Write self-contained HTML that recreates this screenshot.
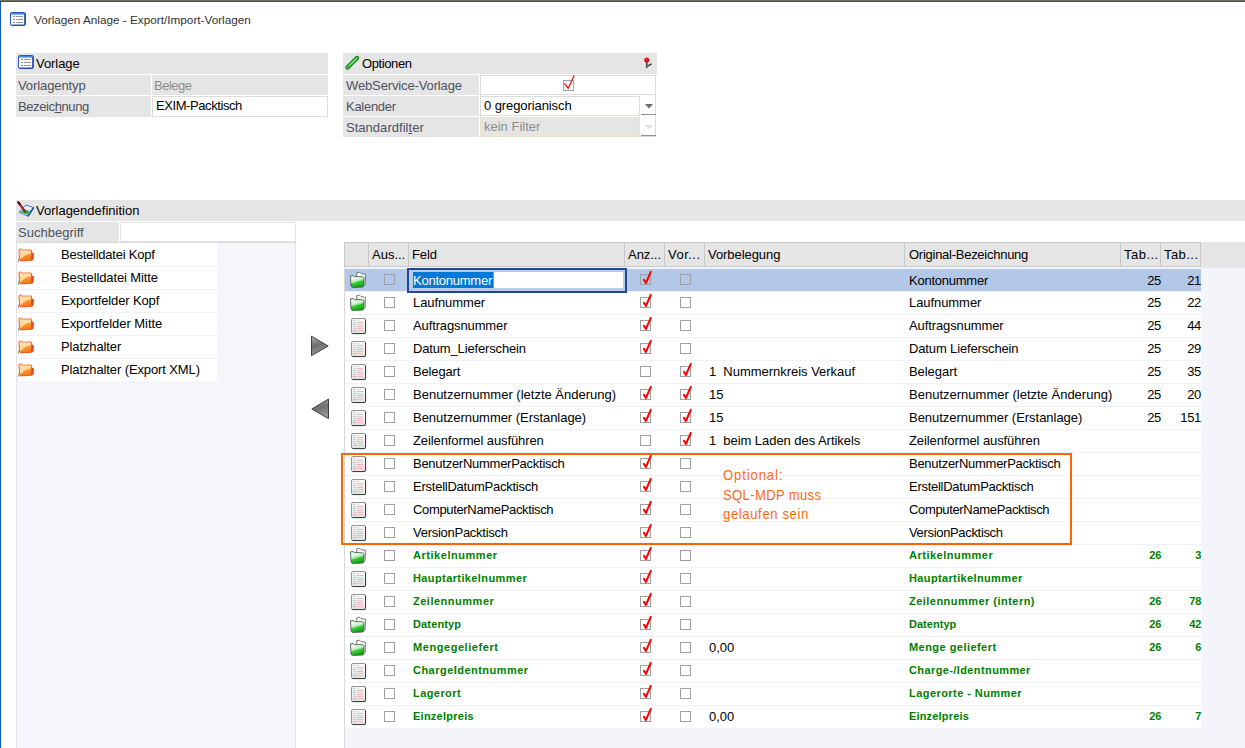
<!DOCTYPE html><html><head><meta charset="utf-8"><style>
*{margin:0;padding:0;box-sizing:border-box}
html,body{width:1245px;height:748px;overflow:hidden;background:#fff;font-family:"Liberation Sans",sans-serif;font-size:13px;color:#000}
.a{position:absolute}
.t{position:absolute;white-space:nowrap;line-height:16px}
.band{position:absolute;background:#e5e5e5}
.lab{color:#4f5060}
.box{position:absolute;background:#fff;border:1px solid #dcdcdc}
.cb{position:absolute;width:11px;height:11px;border:1px solid #a0a0a0}
.g{color:#008000;font-weight:bold;font-size:11px}
.r{text-align:right}
svg{position:absolute;overflow:visible}
</style></head><body>
<div class="a" style="left:0;top:0;width:1245px;height:1px;background:#706a64"></div>
<div class="a" style="left:0;top:1px;width:1245px;height:1px;background:#0a58c2"></div>
<div class="a" style="left:0;top:1px;width:1px;height:747px;background:#0a58c2"></div>
<svg style="left:10px;top:12px" width="16" height="14" viewBox="0 0 16 14">
<rect x="0.5" y="0.5" width="15" height="13" rx="1.2" fill="#fbfbfb" stroke="#2456cc" stroke-width="1"/>
<rect x="1" y="1" width="14" height="1.6" fill="#4a7ee8"/>
<path d="M14.6,2 L14.6,13 L1.5,13" stroke="#1c44a8" stroke-width="0.9" fill="none"/>
<rect x="3" y="4" width="2" height="1" fill="#8c8c8c"/><rect x="6" y="4" width="7" height="1" fill="#9a9a9a"/>
<rect x="3" y="7" width="2" height="1" fill="#8c8c8c"/><rect x="6" y="7" width="7" height="1" fill="#9a9a9a"/>
<rect x="3" y="10" width="2" height="1" fill="#8c8c8c"/><rect x="6" y="10" width="7" height="1" fill="#9a9a9a"/>
</svg>
<div id="x0" class="t" style="left:34px;top:12px;font-size:11.75px;color:#333;">Vorlagen Anlage - Export/Import-Vorlagen</div>
<div class="band" style="left:16px;top:53px;width:312px;height:21px"></div>
<svg style="left:18px;top:55px" width="16" height="14" viewBox="0 0 16 14">
<rect x="0.5" y="0.5" width="15" height="13" rx="1.2" fill="#fbfbfb" stroke="#2456cc" stroke-width="1"/>
<rect x="1" y="1" width="14" height="1.6" fill="#4a7ee8"/>
<path d="M14.6,2 L14.6,13 L1.5,13" stroke="#1c44a8" stroke-width="0.9" fill="none"/>
<rect x="3" y="4" width="2" height="1" fill="#8c8c8c"/><rect x="6" y="4" width="7" height="1" fill="#9a9a9a"/>
<rect x="3" y="7" width="2" height="1" fill="#8c8c8c"/><rect x="6" y="7" width="7" height="1" fill="#9a9a9a"/>
<rect x="3" y="10" width="2" height="1" fill="#8c8c8c"/><rect x="6" y="10" width="7" height="1" fill="#9a9a9a"/>
</svg>
<div id="x1" class="t" style="left:36px;top:56px;letter-spacing:-0.067px;">Vorlage</div>
<div class="band" style="left:16px;top:75px;width:135px;height:20px"></div>
<div class="band" style="left:152px;top:75px;width:176px;height:20px"></div>
<div id="x2" class="t lab" style="left:18px;top:78px;letter-spacing:-0.100px;">Vorlagentyp</div>
<div id="x3" class="t" style="left:154px;top:78px;color:#8c8c8c;letter-spacing:-0.500px;">Belege</div>
<div class="band" style="left:16px;top:96px;width:135px;height:21px"></div>
<div class="box" style="left:152px;top:96px;width:176px;height:21px"></div>
<div id="x4" class="t lab" style="left:18px;top:99px;letter-spacing:-0.400px;">Bezeic<u>h</u>nung</div>
<div id="x5" class="t" style="left:156px;top:98px;letter-spacing:-0.416px;">EXIM-Packtisch</div>
<div class="band" style="left:343px;top:53px;width:314px;height:21px"></div>
<svg style="left:346px;top:56px" width="14" height="13" viewBox="0 0 14 13">
<path d="M1.5,11.5 L11,2" stroke="#0a5a0a" stroke-width="4.2" stroke-linecap="round"/>
<path d="M1.5,11.5 L11,2" stroke="#3cc83c" stroke-width="2.6" stroke-linecap="round"/>
<path d="M3,9.5 L10.5,2.5" stroke="#b8f0a0" stroke-width="0.8"/>
</svg>
<div id="x6" class="t" style="left:362px;top:56px;letter-spacing:-0.400px;">Optionen</div>
<svg style="left:643px;top:56px" width="10" height="12" viewBox="0 0 10 12">
<rect x="2.9" y="5.5" width="1.7" height="6.4" fill="#4a4a54"/>
<path d="M4.6,10 L8.6,7.8" stroke="#404040" stroke-width="1.5"/>
<circle cx="3.7" cy="3.9" r="2.5" fill="#e80000"/><circle cx="3.2" cy="3.3" r="0.8" fill="#ff7070"/>
</svg>
<div class="band" style="left:343px;top:75px;width:136px;height:62px"></div>
<div class="a" style="left:479px;top:75px;width:1px;height:62px;background:#fff"></div>
<div class="a" style="left:480px;top:75px;width:176px;height:62px;background:#fff;border:1px solid #dcdcdc"></div>
<div class="a" style="left:480px;top:94px;width:176px;height:1px;background:#dcdcdc"></div>
<div class="a" style="left:343px;top:95px;width:137px;height:1px;background:#fff"></div>
<div class="a" style="left:343px;top:116px;width:137px;height:1px;background:#fff"></div>
<div id="x7" class="t lab" style="left:346px;top:78px;letter-spacing:-0.130px;">WebService-Vorlage</div>
<div id="x8" class="t lab" style="left:346px;top:99px;letter-spacing:-0.286px;">Kalender</div>
<div id="x9" class="t lab" style="left:346px;top:120px;letter-spacing:0.030px;">Standardfil<u>t</u>er</div>
<div class="cb" style="left:563px;top:80px"></div>
<svg style="left:563px;top:80px" width="11" height="11"><polyline points="1.5,3.5 5.2,8.2 11.2,-4.5" fill="none" stroke="#ff1010" stroke-width="1.3"/></svg>
<div class="box" style="left:480px;top:96px;width:160px;height:20px"></div>
<div id="x10" class="t" style="left:484px;top:98px;letter-spacing:-0.086px;">0 gregorianisch</div>
<svg style="left:645px;top:104px" width="8" height="5"><path d="M0,0 L8,0 L4,4.5 Z" fill="#6a6a6a"/></svg>
<div class="a" style="left:641px;top:114px;width:15px;height:1px;background:#909090"></div>
<div class="a" style="left:480px;top:117px;width:160px;height:20px;background:#e5e5e5;border:1px solid #ece4c8"></div>
<div id="x11" class="t" style="left:484px;top:119px;color:#8c8c8c;">kein Filter</div>
<svg style="left:645px;top:125px" width="8" height="5"><path d="M0,0 L8,0 L4,4.5 Z" fill="#e0e0e0"/></svg>
<div class="a" style="left:641px;top:135px;width:15px;height:1px;background:#909090"></div>
<div class="band" style="left:16px;top:200px;width:1229px;height:21px"></div>
<svg style="left:17px;top:201px" width="18" height="17" viewBox="0 0 18 17">
<path d="M2,11.2 L8.8,4 L16.7,6.5 L10.8,15.3 Z" fill="#e4eeff" stroke="#4a78d8" stroke-width="1"/>
<path d="M10.8,15.3 L16.7,6.5" stroke="#1e4aa8" stroke-width="1.6"/>
<path d="M6,8.5 L13,10.2" stroke="#9aa8f0" stroke-width="1"/>
<path d="M3.4,11 L6.6,8.2 L12.6,10.4 L10.4,13.8 Z" fill="#28b828"/>
<path d="M1.4,1.3 L8.4,10.8" stroke="#a01c1c" stroke-width="2" stroke-linecap="round"/>
<path d="M1.4,1.3 L3,3.5" stroke="#3a1010" stroke-width="2" stroke-linecap="round"/>
</svg>
<div id="x12" class="t" style="left:36px;top:203px;">Vorlagendefinition</div>
<div class="band" style="left:16px;top:222px;width:103px;height:21px"></div>
<div id="x13" class="t lab" style="left:18px;top:225px;letter-spacing:0.020px;">Suchbegriff</div>
<div class="box" style="left:120px;top:222px;width:176px;height:20px;border-color:#e2e2e2"></div><div class="a" style="left:16px;top:242px;width:280px;height:1px;background:#dadada"></div>
<div class="a" style="left:16px;top:243px;width:280px;height:505px;background:#f4f6fb;border-left:1px solid #e4e4e4;border-right:1px solid #e2e2e2"></div>
<div class="a" style="left:17px;top:243px;width:200px;height:138px;background:#fff"></div>
<div class="a" style="left:17px;top:266px;width:200px;height:1px;background:#f0f2f8"></div>
<svg style="left:18px;top:249px" width="16" height="14" viewBox="0 0 16 14">
<defs><linearGradient id="fo" x1="0" y1="0" x2="0.3" y2="1"><stop offset="0" stop-color="#ffd8a0"/><stop offset="0.5" stop-color="#ffa040"/><stop offset="1" stop-color="#f47a18"/></linearGradient></defs>
<path d="M12.5,3.5 L15.6,4.6 L15.2,10.2 Q15,11 14,11.2 L12.5,11.3 Z" fill="#ea4e22" stroke="#b83a18" stroke-width="0.6"/>
<path d="M0.9,0.9 Q1,0.2 1.8,0.2 L3.6,0.2 L4.6,1.1 L12.6,1 Q13.7,1 13.7,2 L13.5,10.4 Q13.4,11.4 12.4,11.4 L2.8,11.9 Q1.8,11.9 1.6,11 Z" fill="url(#fo)" stroke="#e04a1c" stroke-width="0.8"/>
<path d="M1.8,1.6 L12.8,1.6 L12.8,4.6 Q7.5,4.8 3.2,9.6 L2,10 Z" fill="#ffe4b4" opacity="0.85"/>
<path d="M0.5,9.5 L0.5,13.2" stroke="#808080" stroke-width="0.7"/>
</svg>
<div id="x14" class="t" style="left:61px;top:247px;letter-spacing:-0.238px;">Bestelldatei Kopf</div>
<div class="a" style="left:17px;top:289px;width:200px;height:1px;background:#f0f2f8"></div>
<svg style="left:18px;top:272px" width="16" height="14" viewBox="0 0 16 14">
<defs><linearGradient id="fo" x1="0" y1="0" x2="0.3" y2="1"><stop offset="0" stop-color="#ffd8a0"/><stop offset="0.5" stop-color="#ffa040"/><stop offset="1" stop-color="#f47a18"/></linearGradient></defs>
<path d="M12.5,3.5 L15.6,4.6 L15.2,10.2 Q15,11 14,11.2 L12.5,11.3 Z" fill="#ea4e22" stroke="#b83a18" stroke-width="0.6"/>
<path d="M0.9,0.9 Q1,0.2 1.8,0.2 L3.6,0.2 L4.6,1.1 L12.6,1 Q13.7,1 13.7,2 L13.5,10.4 Q13.4,11.4 12.4,11.4 L2.8,11.9 Q1.8,11.9 1.6,11 Z" fill="url(#fo)" stroke="#e04a1c" stroke-width="0.8"/>
<path d="M1.8,1.6 L12.8,1.6 L12.8,4.6 Q7.5,4.8 3.2,9.6 L2,10 Z" fill="#ffe4b4" opacity="0.85"/>
<path d="M0.5,9.5 L0.5,13.2" stroke="#808080" stroke-width="0.7"/>
</svg>
<div id="x15" class="t" style="left:61px;top:270px;letter-spacing:-0.118px;">Bestelldatei Mitte</div>
<div class="a" style="left:17px;top:312px;width:200px;height:1px;background:#f0f2f8"></div>
<svg style="left:18px;top:295px" width="16" height="14" viewBox="0 0 16 14">
<defs><linearGradient id="fo" x1="0" y1="0" x2="0.3" y2="1"><stop offset="0" stop-color="#ffd8a0"/><stop offset="0.5" stop-color="#ffa040"/><stop offset="1" stop-color="#f47a18"/></linearGradient></defs>
<path d="M12.5,3.5 L15.6,4.6 L15.2,10.2 Q15,11 14,11.2 L12.5,11.3 Z" fill="#ea4e22" stroke="#b83a18" stroke-width="0.6"/>
<path d="M0.9,0.9 Q1,0.2 1.8,0.2 L3.6,0.2 L4.6,1.1 L12.6,1 Q13.7,1 13.7,2 L13.5,10.4 Q13.4,11.4 12.4,11.4 L2.8,11.9 Q1.8,11.9 1.6,11 Z" fill="url(#fo)" stroke="#e04a1c" stroke-width="0.8"/>
<path d="M1.8,1.6 L12.8,1.6 L12.8,4.6 Q7.5,4.8 3.2,9.6 L2,10 Z" fill="#ffe4b4" opacity="0.85"/>
<path d="M0.5,9.5 L0.5,13.2" stroke="#808080" stroke-width="0.7"/>
</svg>
<div id="x16" class="t" style="left:61px;top:293px;letter-spacing:-0.137px;">Exportfelder Kopf</div>
<div class="a" style="left:17px;top:335px;width:200px;height:1px;background:#f0f2f8"></div>
<svg style="left:18px;top:318px" width="16" height="14" viewBox="0 0 16 14">
<defs><linearGradient id="fo" x1="0" y1="0" x2="0.3" y2="1"><stop offset="0" stop-color="#ffd8a0"/><stop offset="0.5" stop-color="#ffa040"/><stop offset="1" stop-color="#f47a18"/></linearGradient></defs>
<path d="M12.5,3.5 L15.6,4.6 L15.2,10.2 Q15,11 14,11.2 L12.5,11.3 Z" fill="#ea4e22" stroke="#b83a18" stroke-width="0.6"/>
<path d="M0.9,0.9 Q1,0.2 1.8,0.2 L3.6,0.2 L4.6,1.1 L12.6,1 Q13.7,1 13.7,2 L13.5,10.4 Q13.4,11.4 12.4,11.4 L2.8,11.9 Q1.8,11.9 1.6,11 Z" fill="url(#fo)" stroke="#e04a1c" stroke-width="0.8"/>
<path d="M1.8,1.6 L12.8,1.6 L12.8,4.6 Q7.5,4.8 3.2,9.6 L2,10 Z" fill="#ffe4b4" opacity="0.85"/>
<path d="M0.5,9.5 L0.5,13.2" stroke="#808080" stroke-width="0.7"/>
</svg>
<div id="x17" class="t" style="left:61px;top:316px;letter-spacing:-0.035px;">Exportfelder Mitte</div>
<div class="a" style="left:17px;top:358px;width:200px;height:1px;background:#f0f2f8"></div>
<svg style="left:18px;top:341px" width="16" height="14" viewBox="0 0 16 14">
<defs><linearGradient id="fo" x1="0" y1="0" x2="0.3" y2="1"><stop offset="0" stop-color="#ffd8a0"/><stop offset="0.5" stop-color="#ffa040"/><stop offset="1" stop-color="#f47a18"/></linearGradient></defs>
<path d="M12.5,3.5 L15.6,4.6 L15.2,10.2 Q15,11 14,11.2 L12.5,11.3 Z" fill="#ea4e22" stroke="#b83a18" stroke-width="0.6"/>
<path d="M0.9,0.9 Q1,0.2 1.8,0.2 L3.6,0.2 L4.6,1.1 L12.6,1 Q13.7,1 13.7,2 L13.5,10.4 Q13.4,11.4 12.4,11.4 L2.8,11.9 Q1.8,11.9 1.6,11 Z" fill="url(#fo)" stroke="#e04a1c" stroke-width="0.8"/>
<path d="M1.8,1.6 L12.8,1.6 L12.8,4.6 Q7.5,4.8 3.2,9.6 L2,10 Z" fill="#ffe4b4" opacity="0.85"/>
<path d="M0.5,9.5 L0.5,13.2" stroke="#808080" stroke-width="0.7"/>
</svg>
<div id="x18" class="t" style="left:61px;top:339px;letter-spacing:-0.120px;">Platzhalter</div>
<svg style="left:18px;top:364px" width="16" height="14" viewBox="0 0 16 14">
<defs><linearGradient id="fo" x1="0" y1="0" x2="0.3" y2="1"><stop offset="0" stop-color="#ffd8a0"/><stop offset="0.5" stop-color="#ffa040"/><stop offset="1" stop-color="#f47a18"/></linearGradient></defs>
<path d="M12.5,3.5 L15.6,4.6 L15.2,10.2 Q15,11 14,11.2 L12.5,11.3 Z" fill="#ea4e22" stroke="#b83a18" stroke-width="0.6"/>
<path d="M0.9,0.9 Q1,0.2 1.8,0.2 L3.6,0.2 L4.6,1.1 L12.6,1 Q13.7,1 13.7,2 L13.5,10.4 Q13.4,11.4 12.4,11.4 L2.8,11.9 Q1.8,11.9 1.6,11 Z" fill="url(#fo)" stroke="#e04a1c" stroke-width="0.8"/>
<path d="M1.8,1.6 L12.8,1.6 L12.8,4.6 Q7.5,4.8 3.2,9.6 L2,10 Z" fill="#ffe4b4" opacity="0.85"/>
<path d="M0.5,9.5 L0.5,13.2" stroke="#808080" stroke-width="0.7"/>
</svg>
<div id="x19" class="t" style="left:61px;top:362px;letter-spacing:-0.113px;">Platzhalter (Export XML)</div>
<svg style="left:310px;top:335px" width="20" height="22" viewBox="0 0 20 22">
<defs><linearGradient id="ar" x1="0" y1="0" x2="0.2" y2="1"><stop offset="0" stop-color="#b4b4b4"/><stop offset="0.5" stop-color="#6e6e6e"/><stop offset="1" stop-color="#9a9a9a"/></linearGradient></defs>
<path d="M1.5,1.2 L18.2,11 L1.5,20.6 Z" fill="url(#ar)" stroke="#3e3e3e" stroke-width="1" stroke-linejoin="round"/></svg>
<svg style="left:310px;top:398px" width="20" height="22" viewBox="0 0 20 22">
<path d="M18.5,1 L1.8,11 L18.5,20.6 Z" fill="url(#ar)" stroke="#3e3e3e" stroke-width="1" stroke-linejoin="round"/></svg>
<div class="a" style="left:344px;top:242px;width:901px;height:25px;background:#e5e5e5"></div>
<div class="a" style="left:344px;top:242px;width:857px;height:25px;border:1px solid #c8c8c8"></div>
<div class="a" style="left:368px;top:243px;width:1px;height:23px;background:#c8c8c8"></div>
<div class="a" style="left:408px;top:243px;width:1px;height:23px;background:#c8c8c8"></div>
<div class="a" style="left:624px;top:243px;width:1px;height:23px;background:#c8c8c8"></div>
<div class="a" style="left:664px;top:243px;width:1px;height:23px;background:#c8c8c8"></div>
<div class="a" style="left:704px;top:243px;width:1px;height:23px;background:#c8c8c8"></div>
<div class="a" style="left:904px;top:243px;width:1px;height:23px;background:#c8c8c8"></div>
<div class="a" style="left:1120px;top:243px;width:1px;height:23px;background:#c8c8c8"></div>
<div class="a" style="left:1160px;top:243px;width:1px;height:23px;background:#c8c8c8"></div>
<div id="x20" class="t" style="left:372px;top:247px;">Aus...</div>
<div id="x21" class="t" style="left:412px;top:247px;letter-spacing:-0.067px;">Feld</div>
<div id="x22" class="t" style="left:628px;top:247px;letter-spacing:-0.040px;">Anz...</div>
<div id="x23" class="t" style="left:668px;top:247px;letter-spacing:0.480px;">Vor...</div>
<div id="x24" class="t" style="left:708px;top:247px;letter-spacing:-0.060px;">Vorbelegung</div>
<div id="x25" class="t" style="left:909px;top:247px;letter-spacing:-0.263px;">Original-Bezeichnung</div>
<div id="x26" class="t" style="left:1124px;top:247px;letter-spacing:0.480px;">Tab...</div>
<div id="x27" class="t" style="left:1164px;top:247px;letter-spacing:0.440px;">Tab...</div>
<div class="a" style="left:344px;top:267px;width:901px;height:481px;background:#f4f5fb;border-left:1px solid #d8d8d8"></div>
<div class="a" style="left:1201px;top:242px;width:44px;height:26px;background:#e5e5e5"></div>
<div class="a" style="left:345px;top:268px;width:856px;height:1px;background:#f0f2f8"></div>
<div class="a" style="left:345px;top:269px;width:856px;height:22px;background:#b3c8e8"></div>
<svg style="left:349px;top:271px" width="18" height="18" viewBox="0 0 18 18">
<defs><linearGradient id="fg271" x1="0" y1="0" x2="0.35" y2="1"><stop offset="0" stop-color="#c8f0c8"/><stop offset="0.25" stop-color="#f0fff0"/><stop offset="0.55" stop-color="#b8ecb8"/><stop offset="0.68" stop-color="#38c838"/><stop offset="1" stop-color="#12a812"/></linearGradient></defs>
<path d="M7.6,8 L7.8,1.6 L10.6,1.2 L12,2.6 L16.4,3.2 L16.2,13.5 L14.5,15" fill="#fcfcfc" stroke="#5a5a5a" stroke-width="0.8"/>
<path d="M1.5,4.8 L4,4.5 L5.5,5.6 L13.4,5.7 Q15,5.9 15,7.5 L14.8,14.5 Q14.6,16 13,16.1 L4,16.4 Q2.2,16.4 2,14.6 Z" fill="url(#fg271)" stroke="#354535" stroke-width="0.75"/>
</svg>
<div class="cb" style="left:384px;top:274px"></div>
<div class="cb" style="left:640px;top:274px"></div><svg style="left:640px;top:274px" width="11" height="11"><polyline points="3.9,5.8 5.9,9 10.8,-2.2" fill="none" stroke="#ff0000" stroke-width="2" stroke-linejoin="round" stroke-linecap="round"/></svg>
<div class="cb" style="left:680px;top:274px"></div>
<div id="x29" class="t" style="left:909px;top:273px;letter-spacing:-0.240px;">Kontonummer</div>
<div class="t r" style="left:1121px;width:40px;top:273px;letter-spacing:-0.3px">25</div>
<div class="t r" style="left:1161px;width:40px;top:273px;letter-spacing:-0.3px">21</div>
<div class="a" style="left:345px;top:291px;width:856px;height:1px;background:#f0f2f8"></div>
<div class="a" style="left:345px;top:292px;width:856px;height:22px;background:#fff"></div>
<svg style="left:349px;top:294px" width="18" height="18" viewBox="0 0 18 18">
<defs><linearGradient id="fg294" x1="0" y1="0" x2="0.35" y2="1"><stop offset="0" stop-color="#c8f0c8"/><stop offset="0.25" stop-color="#f0fff0"/><stop offset="0.55" stop-color="#b8ecb8"/><stop offset="0.68" stop-color="#38c838"/><stop offset="1" stop-color="#12a812"/></linearGradient></defs>
<path d="M7.6,8 L7.8,1.6 L10.6,1.2 L12,2.6 L16.4,3.2 L16.2,13.5 L14.5,15" fill="#fcfcfc" stroke="#5a5a5a" stroke-width="0.8"/>
<path d="M1.5,4.8 L4,4.5 L5.5,5.6 L13.4,5.7 Q15,5.9 15,7.5 L14.8,14.5 Q14.6,16 13,16.1 L4,16.4 Q2.2,16.4 2,14.6 Z" fill="url(#fg294)" stroke="#354535" stroke-width="0.75"/>
</svg>
<div class="cb" style="left:384px;top:297px"></div>
<div class="cb" style="left:640px;top:297px"></div><svg style="left:640px;top:297px" width="11" height="11"><polyline points="3.9,5.8 5.9,9 10.8,-2.2" fill="none" stroke="#ff0000" stroke-width="2" stroke-linejoin="round" stroke-linecap="round"/></svg>
<div class="cb" style="left:680px;top:297px"></div>
<div id="x30" class="t" style="left:413px;top:295px;letter-spacing:-0.089px;">Laufnummer</div>
<div id="x31" class="t" style="left:909px;top:295px;letter-spacing:-0.067px;">Laufnummer</div>
<div class="t r" style="left:1121px;width:40px;top:295px;letter-spacing:-0.3px">25</div>
<div class="t r" style="left:1161px;width:40px;top:295px;letter-spacing:-0.3px">22</div>
<div class="a" style="left:345px;top:314px;width:856px;height:1px;background:#f0f2f8"></div>
<div class="a" style="left:345px;top:315px;width:856px;height:22px;background:#fff"></div>
<svg style="left:351px;top:318px" width="16" height="17" viewBox="0 0 16 17">
<defs><linearGradient id="dg" x1="0" y1="0" x2="0" y2="1"><stop offset="0" stop-color="#fafafa"/><stop offset="1" stop-color="#e2e2e2"/></linearGradient></defs>
<rect x="0.5" y="0.5" width="14" height="15" rx="1.5" fill="url(#dg)" stroke="#7a7a7a" stroke-width="0.8"/>
<path d="M14.6,1.5 L14.6,14.2 Q14.6,15.6 13.2,15.6 L1.5,15.6" fill="none" stroke="#383838" stroke-width="1"/>
<g opacity="0.38">
<rect x="2" y="2" width="3" height="1" fill="#999"/><rect x="6" y="2" width="2" height="1" fill="#aaa"/>
<rect x="2" y="4" width="3" height="1" fill="#7a9af0"/><rect x="6" y="4" width="6" height="1" fill="#f05050"/>
<rect x="2" y="6" width="2" height="1" fill="#50a050"/><rect x="4" y="6" width="8" height="1" fill="#b0b0b0"/>
<rect x="2" y="8" width="3" height="1" fill="#70c0c0"/><rect x="6" y="8" width="6" height="1" fill="#f05050"/>
<rect x="2" y="10" width="3" height="1" fill="#7a9af0"/><rect x="6" y="10" width="6" height="1" fill="#f07070"/>
<rect x="2" y="12" width="4" height="1" fill="#f05050"/><rect x="7" y="12" width="5" height="1" fill="#f08080"/>
</g>
</svg>
<div class="cb" style="left:384px;top:320px"></div>
<div class="cb" style="left:640px;top:320px"></div><svg style="left:640px;top:320px" width="11" height="11"><polyline points="3.9,5.8 5.9,9 10.8,-2.2" fill="none" stroke="#ff0000" stroke-width="2" stroke-linejoin="round" stroke-linecap="round"/></svg>
<div class="cb" style="left:680px;top:320px"></div>
<div id="x32" class="t" style="left:413px;top:318px;letter-spacing:-0.124px;">Auftragsnummer</div>
<div id="x33" class="t" style="left:909px;top:318px;letter-spacing:-0.108px;">Auftragsnummer</div>
<div class="t r" style="left:1121px;width:40px;top:318px;letter-spacing:-0.3px">25</div>
<div class="t r" style="left:1161px;width:40px;top:318px;letter-spacing:-0.3px">44</div>
<div class="a" style="left:345px;top:337px;width:856px;height:1px;background:#f0f2f8"></div>
<div class="a" style="left:345px;top:338px;width:856px;height:22px;background:#fff"></div>
<svg style="left:351px;top:341px" width="16" height="17" viewBox="0 0 16 17">
<defs><linearGradient id="dg" x1="0" y1="0" x2="0" y2="1"><stop offset="0" stop-color="#fafafa"/><stop offset="1" stop-color="#e2e2e2"/></linearGradient></defs>
<rect x="0.5" y="0.5" width="14" height="15" rx="1.5" fill="url(#dg)" stroke="#7a7a7a" stroke-width="0.8"/>
<path d="M14.6,1.5 L14.6,14.2 Q14.6,15.6 13.2,15.6 L1.5,15.6" fill="none" stroke="#383838" stroke-width="1"/>
<g opacity="0.38">
<rect x="2" y="2" width="3" height="1" fill="#999"/><rect x="6" y="2" width="2" height="1" fill="#aaa"/>
<rect x="2" y="4" width="3" height="1" fill="#7a9af0"/><rect x="6" y="4" width="6" height="1" fill="#f05050"/>
<rect x="2" y="6" width="2" height="1" fill="#50a050"/><rect x="4" y="6" width="8" height="1" fill="#b0b0b0"/>
<rect x="2" y="8" width="3" height="1" fill="#70c0c0"/><rect x="6" y="8" width="6" height="1" fill="#f05050"/>
<rect x="2" y="10" width="3" height="1" fill="#7a9af0"/><rect x="6" y="10" width="6" height="1" fill="#f07070"/>
<rect x="2" y="12" width="4" height="1" fill="#f05050"/><rect x="7" y="12" width="5" height="1" fill="#f08080"/>
</g>
</svg>
<div class="cb" style="left:384px;top:343px"></div>
<div class="cb" style="left:640px;top:343px"></div><svg style="left:640px;top:343px" width="11" height="11"><polyline points="3.9,5.8 5.9,9 10.8,-2.2" fill="none" stroke="#ff0000" stroke-width="2" stroke-linejoin="round" stroke-linecap="round"/></svg>
<div class="cb" style="left:680px;top:343px"></div>
<div id="x34" class="t" style="left:413px;top:341px;letter-spacing:-0.153px;">Datum_Lieferschein</div>
<div id="x35" class="t" style="left:909px;top:341px;letter-spacing:-0.141px;">Datum Lieferschein</div>
<div class="t r" style="left:1121px;width:40px;top:341px;letter-spacing:-0.3px">25</div>
<div class="t r" style="left:1161px;width:40px;top:341px;letter-spacing:-0.3px">29</div>
<div class="a" style="left:345px;top:360px;width:856px;height:1px;background:#f0f2f8"></div>
<div class="a" style="left:345px;top:361px;width:856px;height:22px;background:#fff"></div>
<svg style="left:351px;top:364px" width="16" height="17" viewBox="0 0 16 17">
<defs><linearGradient id="dg" x1="0" y1="0" x2="0" y2="1"><stop offset="0" stop-color="#fafafa"/><stop offset="1" stop-color="#e2e2e2"/></linearGradient></defs>
<rect x="0.5" y="0.5" width="14" height="15" rx="1.5" fill="url(#dg)" stroke="#7a7a7a" stroke-width="0.8"/>
<path d="M14.6,1.5 L14.6,14.2 Q14.6,15.6 13.2,15.6 L1.5,15.6" fill="none" stroke="#383838" stroke-width="1"/>
<g opacity="0.38">
<rect x="2" y="2" width="3" height="1" fill="#999"/><rect x="6" y="2" width="2" height="1" fill="#aaa"/>
<rect x="2" y="4" width="3" height="1" fill="#7a9af0"/><rect x="6" y="4" width="6" height="1" fill="#f05050"/>
<rect x="2" y="6" width="2" height="1" fill="#50a050"/><rect x="4" y="6" width="8" height="1" fill="#b0b0b0"/>
<rect x="2" y="8" width="3" height="1" fill="#70c0c0"/><rect x="6" y="8" width="6" height="1" fill="#f05050"/>
<rect x="2" y="10" width="3" height="1" fill="#7a9af0"/><rect x="6" y="10" width="6" height="1" fill="#f07070"/>
<rect x="2" y="12" width="4" height="1" fill="#f05050"/><rect x="7" y="12" width="5" height="1" fill="#f08080"/>
</g>
</svg>
<div class="cb" style="left:384px;top:366px"></div>
<div class="cb" style="left:640px;top:366px"></div>
<div class="cb" style="left:680px;top:366px"></div><svg style="left:680px;top:366px" width="11" height="11"><polyline points="3.9,5.8 5.9,9 10.8,-2.2" fill="none" stroke="#ff0000" stroke-width="2" stroke-linejoin="round" stroke-linecap="round"/></svg>
<div id="x36" class="t" style="left:413px;top:364px;letter-spacing:-0.143px;">Belegart</div>
<div id="x37" class="t" style="left:709px;top:364px;letter-spacing:-0.028px;">1&nbsp; Nummernkreis Verkauf</div>
<div id="x38" class="t" style="left:909px;top:364px;letter-spacing:-0.057px;">Belegart</div>
<div class="t r" style="left:1121px;width:40px;top:364px;letter-spacing:-0.3px">25</div>
<div class="t r" style="left:1161px;width:40px;top:364px;letter-spacing:-0.3px">35</div>
<div class="a" style="left:345px;top:383px;width:856px;height:1px;background:#f0f2f8"></div>
<div class="a" style="left:345px;top:384px;width:856px;height:22px;background:#fff"></div>
<svg style="left:351px;top:387px" width="16" height="17" viewBox="0 0 16 17">
<defs><linearGradient id="dg" x1="0" y1="0" x2="0" y2="1"><stop offset="0" stop-color="#fafafa"/><stop offset="1" stop-color="#e2e2e2"/></linearGradient></defs>
<rect x="0.5" y="0.5" width="14" height="15" rx="1.5" fill="url(#dg)" stroke="#7a7a7a" stroke-width="0.8"/>
<path d="M14.6,1.5 L14.6,14.2 Q14.6,15.6 13.2,15.6 L1.5,15.6" fill="none" stroke="#383838" stroke-width="1"/>
<g opacity="0.38">
<rect x="2" y="2" width="3" height="1" fill="#999"/><rect x="6" y="2" width="2" height="1" fill="#aaa"/>
<rect x="2" y="4" width="3" height="1" fill="#7a9af0"/><rect x="6" y="4" width="6" height="1" fill="#f05050"/>
<rect x="2" y="6" width="2" height="1" fill="#50a050"/><rect x="4" y="6" width="8" height="1" fill="#b0b0b0"/>
<rect x="2" y="8" width="3" height="1" fill="#70c0c0"/><rect x="6" y="8" width="6" height="1" fill="#f05050"/>
<rect x="2" y="10" width="3" height="1" fill="#7a9af0"/><rect x="6" y="10" width="6" height="1" fill="#f07070"/>
<rect x="2" y="12" width="4" height="1" fill="#f05050"/><rect x="7" y="12" width="5" height="1" fill="#f08080"/>
</g>
</svg>
<div class="cb" style="left:384px;top:389px"></div>
<div class="cb" style="left:640px;top:389px"></div><svg style="left:640px;top:389px" width="11" height="11"><polyline points="3.9,5.8 5.9,9 10.8,-2.2" fill="none" stroke="#ff0000" stroke-width="2" stroke-linejoin="round" stroke-linecap="round"/></svg>
<div class="cb" style="left:680px;top:389px"></div><svg style="left:680px;top:389px" width="11" height="11"><polyline points="3.9,5.8 5.9,9 10.8,-2.2" fill="none" stroke="#ff0000" stroke-width="2" stroke-linejoin="round" stroke-linecap="round"/></svg>
<div id="x39" class="t" style="left:413px;top:387px;">Benutzernummer (letzte Änderung)</div>
<div id="x40" class="t" style="left:709px;top:387px;">15</div>
<div id="x41" class="t" style="left:909px;top:387px;letter-spacing:0.006px;">Benutzernummer (letzte Änderung)</div>
<div class="t r" style="left:1121px;width:40px;top:387px;letter-spacing:-0.3px">25</div>
<div class="t r" style="left:1161px;width:40px;top:387px;letter-spacing:-0.3px">20</div>
<div class="a" style="left:345px;top:406px;width:856px;height:1px;background:#f0f2f8"></div>
<div class="a" style="left:345px;top:407px;width:856px;height:22px;background:#fff"></div>
<svg style="left:351px;top:410px" width="16" height="17" viewBox="0 0 16 17">
<defs><linearGradient id="dg" x1="0" y1="0" x2="0" y2="1"><stop offset="0" stop-color="#fafafa"/><stop offset="1" stop-color="#e2e2e2"/></linearGradient></defs>
<rect x="0.5" y="0.5" width="14" height="15" rx="1.5" fill="url(#dg)" stroke="#7a7a7a" stroke-width="0.8"/>
<path d="M14.6,1.5 L14.6,14.2 Q14.6,15.6 13.2,15.6 L1.5,15.6" fill="none" stroke="#383838" stroke-width="1"/>
<g opacity="0.38">
<rect x="2" y="2" width="3" height="1" fill="#999"/><rect x="6" y="2" width="2" height="1" fill="#aaa"/>
<rect x="2" y="4" width="3" height="1" fill="#7a9af0"/><rect x="6" y="4" width="6" height="1" fill="#f05050"/>
<rect x="2" y="6" width="2" height="1" fill="#50a050"/><rect x="4" y="6" width="8" height="1" fill="#b0b0b0"/>
<rect x="2" y="8" width="3" height="1" fill="#70c0c0"/><rect x="6" y="8" width="6" height="1" fill="#f05050"/>
<rect x="2" y="10" width="3" height="1" fill="#7a9af0"/><rect x="6" y="10" width="6" height="1" fill="#f07070"/>
<rect x="2" y="12" width="4" height="1" fill="#f05050"/><rect x="7" y="12" width="5" height="1" fill="#f08080"/>
</g>
</svg>
<div class="cb" style="left:384px;top:412px"></div>
<div class="cb" style="left:640px;top:412px"></div><svg style="left:640px;top:412px" width="11" height="11"><polyline points="3.9,5.8 5.9,9 10.8,-2.2" fill="none" stroke="#ff0000" stroke-width="2" stroke-linejoin="round" stroke-linecap="round"/></svg>
<div class="cb" style="left:680px;top:412px"></div><svg style="left:680px;top:412px" width="11" height="11"><polyline points="3.9,5.8 5.9,9 10.8,-2.2" fill="none" stroke="#ff0000" stroke-width="2" stroke-linejoin="round" stroke-linecap="round"/></svg>
<div id="x42" class="t" style="left:413px;top:410px;letter-spacing:-0.039px;">Benutzernummer (Erstanlage)</div>
<div id="x43" class="t" style="left:709px;top:410px;">15</div>
<div id="x44" class="t" style="left:909px;top:410px;letter-spacing:-0.031px;">Benutzernummer (Erstanlage)</div>
<div class="t r" style="left:1121px;width:40px;top:410px;letter-spacing:-0.3px">25</div>
<div class="t r" style="left:1161px;width:40px;top:410px;letter-spacing:-0.3px">151</div>
<div class="a" style="left:345px;top:429px;width:856px;height:1px;background:#f0f2f8"></div>
<div class="a" style="left:345px;top:430px;width:856px;height:22px;background:#fff"></div>
<svg style="left:351px;top:433px" width="16" height="17" viewBox="0 0 16 17">
<defs><linearGradient id="dg" x1="0" y1="0" x2="0" y2="1"><stop offset="0" stop-color="#fafafa"/><stop offset="1" stop-color="#e2e2e2"/></linearGradient></defs>
<rect x="0.5" y="0.5" width="14" height="15" rx="1.5" fill="url(#dg)" stroke="#7a7a7a" stroke-width="0.8"/>
<path d="M14.6,1.5 L14.6,14.2 Q14.6,15.6 13.2,15.6 L1.5,15.6" fill="none" stroke="#383838" stroke-width="1"/>
<g opacity="0.38">
<rect x="2" y="2" width="3" height="1" fill="#999"/><rect x="6" y="2" width="2" height="1" fill="#aaa"/>
<rect x="2" y="4" width="3" height="1" fill="#7a9af0"/><rect x="6" y="4" width="6" height="1" fill="#f05050"/>
<rect x="2" y="6" width="2" height="1" fill="#50a050"/><rect x="4" y="6" width="8" height="1" fill="#b0b0b0"/>
<rect x="2" y="8" width="3" height="1" fill="#70c0c0"/><rect x="6" y="8" width="6" height="1" fill="#f05050"/>
<rect x="2" y="10" width="3" height="1" fill="#7a9af0"/><rect x="6" y="10" width="6" height="1" fill="#f07070"/>
<rect x="2" y="12" width="4" height="1" fill="#f05050"/><rect x="7" y="12" width="5" height="1" fill="#f08080"/>
</g>
</svg>
<div class="cb" style="left:384px;top:435px"></div>
<div class="cb" style="left:640px;top:435px"></div>
<div class="cb" style="left:680px;top:435px"></div><svg style="left:680px;top:435px" width="11" height="11"><polyline points="3.9,5.8 5.9,9 10.8,-2.2" fill="none" stroke="#ff0000" stroke-width="2" stroke-linejoin="round" stroke-linecap="round"/></svg>
<div id="x45" class="t" style="left:413px;top:433px;letter-spacing:-0.105px;">Zeilenformel ausführen</div>
<div id="x46" class="t" style="left:709px;top:433px;letter-spacing:-0.048px;">1&nbsp; beim Laden des Artikels</div>
<div id="x47" class="t" style="left:909px;top:433px;letter-spacing:-0.095px;">Zeilenformel ausführen</div>
<div class="a" style="left:345px;top:452px;width:856px;height:1px;background:#f0f2f8"></div>
<div class="a" style="left:345px;top:453px;width:856px;height:22px;background:#fff"></div>
<svg style="left:351px;top:456px" width="16" height="17" viewBox="0 0 16 17">
<defs><linearGradient id="dg" x1="0" y1="0" x2="0" y2="1"><stop offset="0" stop-color="#fafafa"/><stop offset="1" stop-color="#e2e2e2"/></linearGradient></defs>
<rect x="0.5" y="0.5" width="14" height="15" rx="1.5" fill="url(#dg)" stroke="#7a7a7a" stroke-width="0.8"/>
<path d="M14.6,1.5 L14.6,14.2 Q14.6,15.6 13.2,15.6 L1.5,15.6" fill="none" stroke="#383838" stroke-width="1"/>
<g opacity="0.38">
<rect x="2" y="2" width="3" height="1" fill="#999"/><rect x="6" y="2" width="2" height="1" fill="#aaa"/>
<rect x="2" y="4" width="3" height="1" fill="#7a9af0"/><rect x="6" y="4" width="6" height="1" fill="#f05050"/>
<rect x="2" y="6" width="2" height="1" fill="#50a050"/><rect x="4" y="6" width="8" height="1" fill="#b0b0b0"/>
<rect x="2" y="8" width="3" height="1" fill="#70c0c0"/><rect x="6" y="8" width="6" height="1" fill="#f05050"/>
<rect x="2" y="10" width="3" height="1" fill="#7a9af0"/><rect x="6" y="10" width="6" height="1" fill="#f07070"/>
<rect x="2" y="12" width="4" height="1" fill="#f05050"/><rect x="7" y="12" width="5" height="1" fill="#f08080"/>
</g>
</svg>
<div class="cb" style="left:384px;top:458px"></div>
<div class="cb" style="left:640px;top:458px"></div><svg style="left:640px;top:458px" width="11" height="11"><polyline points="3.9,5.8 5.9,9 10.8,-2.2" fill="none" stroke="#ff0000" stroke-width="2" stroke-linejoin="round" stroke-linecap="round"/></svg>
<div class="cb" style="left:680px;top:458px"></div>
<div id="x48" class="t" style="left:413px;top:456px;letter-spacing:-0.263px;">BenutzerNummerPacktisch</div>
<div id="x49" class="t" style="left:909px;top:456px;letter-spacing:-0.263px;">BenutzerNummerPacktisch</div>
<div class="a" style="left:345px;top:475px;width:856px;height:1px;background:#f0f2f8"></div>
<div class="a" style="left:345px;top:476px;width:856px;height:22px;background:#fff"></div>
<svg style="left:351px;top:479px" width="16" height="17" viewBox="0 0 16 17">
<defs><linearGradient id="dg" x1="0" y1="0" x2="0" y2="1"><stop offset="0" stop-color="#fafafa"/><stop offset="1" stop-color="#e2e2e2"/></linearGradient></defs>
<rect x="0.5" y="0.5" width="14" height="15" rx="1.5" fill="url(#dg)" stroke="#7a7a7a" stroke-width="0.8"/>
<path d="M14.6,1.5 L14.6,14.2 Q14.6,15.6 13.2,15.6 L1.5,15.6" fill="none" stroke="#383838" stroke-width="1"/>
<g opacity="0.38">
<rect x="2" y="2" width="3" height="1" fill="#999"/><rect x="6" y="2" width="2" height="1" fill="#aaa"/>
<rect x="2" y="4" width="3" height="1" fill="#7a9af0"/><rect x="6" y="4" width="6" height="1" fill="#f05050"/>
<rect x="2" y="6" width="2" height="1" fill="#50a050"/><rect x="4" y="6" width="8" height="1" fill="#b0b0b0"/>
<rect x="2" y="8" width="3" height="1" fill="#70c0c0"/><rect x="6" y="8" width="6" height="1" fill="#f05050"/>
<rect x="2" y="10" width="3" height="1" fill="#7a9af0"/><rect x="6" y="10" width="6" height="1" fill="#f07070"/>
<rect x="2" y="12" width="4" height="1" fill="#f05050"/><rect x="7" y="12" width="5" height="1" fill="#f08080"/>
</g>
</svg>
<div class="cb" style="left:384px;top:481px"></div>
<div class="cb" style="left:640px;top:481px"></div><svg style="left:640px;top:481px" width="11" height="11"><polyline points="3.9,5.8 5.9,9 10.8,-2.2" fill="none" stroke="#ff0000" stroke-width="2" stroke-linejoin="round" stroke-linecap="round"/></svg>
<div class="cb" style="left:680px;top:481px"></div>
<div id="x50" class="t" style="left:413px;top:479px;letter-spacing:-0.240px;">ErstellDatumPacktisch</div>
<div id="x51" class="t" style="left:909px;top:479px;letter-spacing:-0.270px;">ErstellDatumPacktisch</div>
<div class="a" style="left:345px;top:498px;width:856px;height:1px;background:#f0f2f8"></div>
<div class="a" style="left:345px;top:499px;width:856px;height:22px;background:#fff"></div>
<svg style="left:351px;top:502px" width="16" height="17" viewBox="0 0 16 17">
<defs><linearGradient id="dg" x1="0" y1="0" x2="0" y2="1"><stop offset="0" stop-color="#fafafa"/><stop offset="1" stop-color="#e2e2e2"/></linearGradient></defs>
<rect x="0.5" y="0.5" width="14" height="15" rx="1.5" fill="url(#dg)" stroke="#7a7a7a" stroke-width="0.8"/>
<path d="M14.6,1.5 L14.6,14.2 Q14.6,15.6 13.2,15.6 L1.5,15.6" fill="none" stroke="#383838" stroke-width="1"/>
<g opacity="0.38">
<rect x="2" y="2" width="3" height="1" fill="#999"/><rect x="6" y="2" width="2" height="1" fill="#aaa"/>
<rect x="2" y="4" width="3" height="1" fill="#7a9af0"/><rect x="6" y="4" width="6" height="1" fill="#f05050"/>
<rect x="2" y="6" width="2" height="1" fill="#50a050"/><rect x="4" y="6" width="8" height="1" fill="#b0b0b0"/>
<rect x="2" y="8" width="3" height="1" fill="#70c0c0"/><rect x="6" y="8" width="6" height="1" fill="#f05050"/>
<rect x="2" y="10" width="3" height="1" fill="#7a9af0"/><rect x="6" y="10" width="6" height="1" fill="#f07070"/>
<rect x="2" y="12" width="4" height="1" fill="#f05050"/><rect x="7" y="12" width="5" height="1" fill="#f08080"/>
</g>
</svg>
<div class="cb" style="left:384px;top:504px"></div>
<div class="cb" style="left:640px;top:504px"></div><svg style="left:640px;top:504px" width="11" height="11"><polyline points="3.9,5.8 5.9,9 10.8,-2.2" fill="none" stroke="#ff0000" stroke-width="2" stroke-linejoin="round" stroke-linecap="round"/></svg>
<div class="cb" style="left:680px;top:504px"></div>
<div id="x52" class="t" style="left:413px;top:502px;letter-spacing:-0.340px;">ComputerNamePacktisch</div>
<div id="x53" class="t" style="left:909px;top:502px;letter-spacing:-0.340px;">ComputerNamePacktisch</div>
<div class="a" style="left:345px;top:521px;width:856px;height:1px;background:#f0f2f8"></div>
<div class="a" style="left:345px;top:522px;width:856px;height:22px;background:#fff"></div>
<svg style="left:351px;top:525px" width="16" height="17" viewBox="0 0 16 17">
<defs><linearGradient id="dg" x1="0" y1="0" x2="0" y2="1"><stop offset="0" stop-color="#fafafa"/><stop offset="1" stop-color="#e2e2e2"/></linearGradient></defs>
<rect x="0.5" y="0.5" width="14" height="15" rx="1.5" fill="url(#dg)" stroke="#7a7a7a" stroke-width="0.8"/>
<path d="M14.6,1.5 L14.6,14.2 Q14.6,15.6 13.2,15.6 L1.5,15.6" fill="none" stroke="#383838" stroke-width="1"/>
<g opacity="0.38">
<rect x="2" y="2" width="3" height="1" fill="#999"/><rect x="6" y="2" width="2" height="1" fill="#aaa"/>
<rect x="2" y="4" width="3" height="1" fill="#7a9af0"/><rect x="6" y="4" width="6" height="1" fill="#f05050"/>
<rect x="2" y="6" width="2" height="1" fill="#50a050"/><rect x="4" y="6" width="8" height="1" fill="#b0b0b0"/>
<rect x="2" y="8" width="3" height="1" fill="#70c0c0"/><rect x="6" y="8" width="6" height="1" fill="#f05050"/>
<rect x="2" y="10" width="3" height="1" fill="#7a9af0"/><rect x="6" y="10" width="6" height="1" fill="#f07070"/>
<rect x="2" y="12" width="4" height="1" fill="#f05050"/><rect x="7" y="12" width="5" height="1" fill="#f08080"/>
</g>
</svg>
<div class="cb" style="left:384px;top:527px"></div>
<div class="cb" style="left:640px;top:527px"></div><svg style="left:640px;top:527px" width="11" height="11"><polyline points="3.9,5.8 5.9,9 10.8,-2.2" fill="none" stroke="#ff0000" stroke-width="2" stroke-linejoin="round" stroke-linecap="round"/></svg>
<div class="cb" style="left:680px;top:527px"></div>
<div id="x54" class="t" style="left:413px;top:525px;letter-spacing:-0.267px;">VersionPacktisch</div>
<div id="x55" class="t" style="left:909px;top:525px;letter-spacing:-0.333px;">VersionPacktisch</div>
<div class="a" style="left:345px;top:544px;width:856px;height:1px;background:#f0f2f8"></div>
<div class="a" style="left:345px;top:545px;width:856px;height:22px;background:#fff"></div>
<svg style="left:349px;top:547px" width="18" height="18" viewBox="0 0 18 18">
<defs><linearGradient id="fg547" x1="0" y1="0" x2="0.35" y2="1"><stop offset="0" stop-color="#c8f0c8"/><stop offset="0.25" stop-color="#f0fff0"/><stop offset="0.55" stop-color="#b8ecb8"/><stop offset="0.68" stop-color="#38c838"/><stop offset="1" stop-color="#12a812"/></linearGradient></defs>
<path d="M7.6,8 L7.8,1.6 L10.6,1.2 L12,2.6 L16.4,3.2 L16.2,13.5 L14.5,15" fill="#fcfcfc" stroke="#5a5a5a" stroke-width="0.8"/>
<path d="M1.5,4.8 L4,4.5 L5.5,5.6 L13.4,5.7 Q15,5.9 15,7.5 L14.8,14.5 Q14.6,16 13,16.1 L4,16.4 Q2.2,16.4 2,14.6 Z" fill="url(#fg547)" stroke="#354535" stroke-width="0.75"/>
</svg>
<div class="cb" style="left:384px;top:550px"></div>
<div class="cb" style="left:640px;top:550px"></div><svg style="left:640px;top:550px" width="11" height="11"><polyline points="3.9,5.8 5.9,9 10.8,-2.2" fill="none" stroke="#ff0000" stroke-width="2" stroke-linejoin="round" stroke-linecap="round"/></svg>
<div class="cb" style="left:680px;top:550px"></div>
<div id="x56" class="t g" style="left:413px;top:547px;letter-spacing:0.542px;">Artikelnummer</div>
<div id="x57" class="t g" style="left:909px;top:547px;letter-spacing:0.508px;">Artikelnummer</div>
<div class="t g r" style="left:1121px;width:40px;top:547px;letter-spacing:-0.3px">26</div>
<div class="t g r" style="left:1161px;width:40px;top:547px;letter-spacing:-0.3px">3</div>
<div class="a" style="left:345px;top:567px;width:856px;height:1px;background:#f0f2f8"></div>
<div class="a" style="left:345px;top:568px;width:856px;height:22px;background:#fff"></div>
<svg style="left:351px;top:571px" width="16" height="17" viewBox="0 0 16 17">
<defs><linearGradient id="dg" x1="0" y1="0" x2="0" y2="1"><stop offset="0" stop-color="#fafafa"/><stop offset="1" stop-color="#e2e2e2"/></linearGradient></defs>
<rect x="0.5" y="0.5" width="14" height="15" rx="1.5" fill="url(#dg)" stroke="#7a7a7a" stroke-width="0.8"/>
<path d="M14.6,1.5 L14.6,14.2 Q14.6,15.6 13.2,15.6 L1.5,15.6" fill="none" stroke="#383838" stroke-width="1"/>
<g opacity="0.38">
<rect x="2" y="2" width="3" height="1" fill="#999"/><rect x="6" y="2" width="2" height="1" fill="#aaa"/>
<rect x="2" y="4" width="3" height="1" fill="#7a9af0"/><rect x="6" y="4" width="6" height="1" fill="#f05050"/>
<rect x="2" y="6" width="2" height="1" fill="#50a050"/><rect x="4" y="6" width="8" height="1" fill="#b0b0b0"/>
<rect x="2" y="8" width="3" height="1" fill="#70c0c0"/><rect x="6" y="8" width="6" height="1" fill="#f05050"/>
<rect x="2" y="10" width="3" height="1" fill="#7a9af0"/><rect x="6" y="10" width="6" height="1" fill="#f07070"/>
<rect x="2" y="12" width="4" height="1" fill="#f05050"/><rect x="7" y="12" width="5" height="1" fill="#f08080"/>
</g>
</svg>
<div class="cb" style="left:384px;top:573px"></div>
<div class="cb" style="left:640px;top:573px"></div><svg style="left:640px;top:573px" width="11" height="11"><polyline points="3.9,5.8 5.9,9 10.8,-2.2" fill="none" stroke="#ff0000" stroke-width="2" stroke-linejoin="round" stroke-linecap="round"/></svg>
<div class="cb" style="left:680px;top:573px"></div>
<div id="x58" class="t g" style="left:413px;top:570px;letter-spacing:0.394px;">Hauptartikelnummer</div>
<div id="x59" class="t g" style="left:909px;top:570px;letter-spacing:0.365px;">Hauptartikelnummer</div>
<div class="a" style="left:345px;top:590px;width:856px;height:1px;background:#f0f2f8"></div>
<div class="a" style="left:345px;top:591px;width:856px;height:22px;background:#fff"></div>
<svg style="left:351px;top:594px" width="16" height="17" viewBox="0 0 16 17">
<defs><linearGradient id="dg" x1="0" y1="0" x2="0" y2="1"><stop offset="0" stop-color="#fafafa"/><stop offset="1" stop-color="#e2e2e2"/></linearGradient></defs>
<rect x="0.5" y="0.5" width="14" height="15" rx="1.5" fill="url(#dg)" stroke="#7a7a7a" stroke-width="0.8"/>
<path d="M14.6,1.5 L14.6,14.2 Q14.6,15.6 13.2,15.6 L1.5,15.6" fill="none" stroke="#383838" stroke-width="1"/>
<g opacity="0.38">
<rect x="2" y="2" width="3" height="1" fill="#999"/><rect x="6" y="2" width="2" height="1" fill="#aaa"/>
<rect x="2" y="4" width="3" height="1" fill="#7a9af0"/><rect x="6" y="4" width="6" height="1" fill="#f05050"/>
<rect x="2" y="6" width="2" height="1" fill="#50a050"/><rect x="4" y="6" width="8" height="1" fill="#b0b0b0"/>
<rect x="2" y="8" width="3" height="1" fill="#70c0c0"/><rect x="6" y="8" width="6" height="1" fill="#f05050"/>
<rect x="2" y="10" width="3" height="1" fill="#7a9af0"/><rect x="6" y="10" width="6" height="1" fill="#f07070"/>
<rect x="2" y="12" width="4" height="1" fill="#f05050"/><rect x="7" y="12" width="5" height="1" fill="#f08080"/>
</g>
</svg>
<div class="cb" style="left:384px;top:596px"></div>
<div class="cb" style="left:640px;top:596px"></div><svg style="left:640px;top:596px" width="11" height="11"><polyline points="3.9,5.8 5.9,9 10.8,-2.2" fill="none" stroke="#ff0000" stroke-width="2" stroke-linejoin="round" stroke-linecap="round"/></svg>
<div class="cb" style="left:680px;top:596px"></div>
<div id="x60" class="t g" style="left:413px;top:593px;letter-spacing:0.509px;">Zeilennummer</div>
<div id="x61" class="t g" style="left:909px;top:593px;letter-spacing:0.470px;">Zeilennummer (intern)</div>
<div class="t g r" style="left:1121px;width:40px;top:593px;letter-spacing:-0.3px">26</div>
<div class="t g r" style="left:1161px;width:40px;top:593px;letter-spacing:-0.3px">78</div>
<div class="a" style="left:345px;top:613px;width:856px;height:1px;background:#f0f2f8"></div>
<div class="a" style="left:345px;top:614px;width:856px;height:22px;background:#fff"></div>
<svg style="left:349px;top:616px" width="18" height="18" viewBox="0 0 18 18">
<defs><linearGradient id="fg616" x1="0" y1="0" x2="0.35" y2="1"><stop offset="0" stop-color="#c8f0c8"/><stop offset="0.25" stop-color="#f0fff0"/><stop offset="0.55" stop-color="#b8ecb8"/><stop offset="0.68" stop-color="#38c838"/><stop offset="1" stop-color="#12a812"/></linearGradient></defs>
<path d="M7.6,8 L7.8,1.6 L10.6,1.2 L12,2.6 L16.4,3.2 L16.2,13.5 L14.5,15" fill="#fcfcfc" stroke="#5a5a5a" stroke-width="0.8"/>
<path d="M1.5,4.8 L4,4.5 L5.5,5.6 L13.4,5.7 Q15,5.9 15,7.5 L14.8,14.5 Q14.6,16 13,16.1 L4,16.4 Q2.2,16.4 2,14.6 Z" fill="url(#fg616)" stroke="#354535" stroke-width="0.75"/>
</svg>
<div class="cb" style="left:384px;top:619px"></div>
<div class="cb" style="left:640px;top:619px"></div><svg style="left:640px;top:619px" width="11" height="11"><polyline points="3.9,5.8 5.9,9 10.8,-2.2" fill="none" stroke="#ff0000" stroke-width="2" stroke-linejoin="round" stroke-linecap="round"/></svg>
<div class="cb" style="left:680px;top:619px"></div>
<div id="x62" class="t g" style="left:413px;top:616px;letter-spacing:0.143px;">Datentyp</div>
<div id="x63" class="t g" style="left:909px;top:616px;letter-spacing:0.029px;">Datentyp</div>
<div class="t g r" style="left:1121px;width:40px;top:616px;letter-spacing:-0.3px">26</div>
<div class="t g r" style="left:1161px;width:40px;top:616px;letter-spacing:-0.3px">42</div>
<div class="a" style="left:345px;top:636px;width:856px;height:1px;background:#f0f2f8"></div>
<div class="a" style="left:345px;top:637px;width:856px;height:22px;background:#fff"></div>
<svg style="left:349px;top:639px" width="18" height="18" viewBox="0 0 18 18">
<defs><linearGradient id="fg639" x1="0" y1="0" x2="0.35" y2="1"><stop offset="0" stop-color="#c8f0c8"/><stop offset="0.25" stop-color="#f0fff0"/><stop offset="0.55" stop-color="#b8ecb8"/><stop offset="0.68" stop-color="#38c838"/><stop offset="1" stop-color="#12a812"/></linearGradient></defs>
<path d="M7.6,8 L7.8,1.6 L10.6,1.2 L12,2.6 L16.4,3.2 L16.2,13.5 L14.5,15" fill="#fcfcfc" stroke="#5a5a5a" stroke-width="0.8"/>
<path d="M1.5,4.8 L4,4.5 L5.5,5.6 L13.4,5.7 Q15,5.9 15,7.5 L14.8,14.5 Q14.6,16 13,16.1 L4,16.4 Q2.2,16.4 2,14.6 Z" fill="url(#fg639)" stroke="#354535" stroke-width="0.75"/>
</svg>
<div class="cb" style="left:384px;top:642px"></div>
<div class="cb" style="left:640px;top:642px"></div><svg style="left:640px;top:642px" width="11" height="11"><polyline points="3.9,5.8 5.9,9 10.8,-2.2" fill="none" stroke="#ff0000" stroke-width="2" stroke-linejoin="round" stroke-linecap="round"/></svg>
<div class="cb" style="left:680px;top:642px"></div>
<div id="x64" class="t g" style="left:413px;top:639px;letter-spacing:0.562px;">Mengegeliefert</div>
<div id="x65" class="t" style="left:709px;top:640px;">0,00</div>
<div id="x66" class="t g" style="left:909px;top:639px;letter-spacing:0.457px;">Menge geliefert</div>
<div class="t g r" style="left:1121px;width:40px;top:639px;letter-spacing:-0.3px">26</div>
<div class="t g r" style="left:1161px;width:40px;top:639px;letter-spacing:-0.3px">6</div>
<div class="a" style="left:345px;top:659px;width:856px;height:1px;background:#f0f2f8"></div>
<div class="a" style="left:345px;top:660px;width:856px;height:22px;background:#fff"></div>
<svg style="left:351px;top:663px" width="16" height="17" viewBox="0 0 16 17">
<defs><linearGradient id="dg" x1="0" y1="0" x2="0" y2="1"><stop offset="0" stop-color="#fafafa"/><stop offset="1" stop-color="#e2e2e2"/></linearGradient></defs>
<rect x="0.5" y="0.5" width="14" height="15" rx="1.5" fill="url(#dg)" stroke="#7a7a7a" stroke-width="0.8"/>
<path d="M14.6,1.5 L14.6,14.2 Q14.6,15.6 13.2,15.6 L1.5,15.6" fill="none" stroke="#383838" stroke-width="1"/>
<g opacity="0.38">
<rect x="2" y="2" width="3" height="1" fill="#999"/><rect x="6" y="2" width="2" height="1" fill="#aaa"/>
<rect x="2" y="4" width="3" height="1" fill="#7a9af0"/><rect x="6" y="4" width="6" height="1" fill="#f05050"/>
<rect x="2" y="6" width="2" height="1" fill="#50a050"/><rect x="4" y="6" width="8" height="1" fill="#b0b0b0"/>
<rect x="2" y="8" width="3" height="1" fill="#70c0c0"/><rect x="6" y="8" width="6" height="1" fill="#f05050"/>
<rect x="2" y="10" width="3" height="1" fill="#7a9af0"/><rect x="6" y="10" width="6" height="1" fill="#f07070"/>
<rect x="2" y="12" width="4" height="1" fill="#f05050"/><rect x="7" y="12" width="5" height="1" fill="#f08080"/>
</g>
</svg>
<div class="cb" style="left:384px;top:665px"></div>
<div class="cb" style="left:640px;top:665px"></div><svg style="left:640px;top:665px" width="11" height="11"><polyline points="3.9,5.8 5.9,9 10.8,-2.2" fill="none" stroke="#ff0000" stroke-width="2" stroke-linejoin="round" stroke-linecap="round"/></svg>
<div class="cb" style="left:680px;top:665px"></div>
<div id="x67" class="t g" style="left:413px;top:662px;letter-spacing:0.469px;">ChargeIdentnummer</div>
<div id="x68" class="t g" style="left:909px;top:662px;letter-spacing:0.394px;">Charge-/Identnummer</div>
<div class="a" style="left:345px;top:682px;width:856px;height:1px;background:#f0f2f8"></div>
<div class="a" style="left:345px;top:683px;width:856px;height:22px;background:#fff"></div>
<svg style="left:351px;top:686px" width="16" height="17" viewBox="0 0 16 17">
<defs><linearGradient id="dg" x1="0" y1="0" x2="0" y2="1"><stop offset="0" stop-color="#fafafa"/><stop offset="1" stop-color="#e2e2e2"/></linearGradient></defs>
<rect x="0.5" y="0.5" width="14" height="15" rx="1.5" fill="url(#dg)" stroke="#7a7a7a" stroke-width="0.8"/>
<path d="M14.6,1.5 L14.6,14.2 Q14.6,15.6 13.2,15.6 L1.5,15.6" fill="none" stroke="#383838" stroke-width="1"/>
<g opacity="0.38">
<rect x="2" y="2" width="3" height="1" fill="#999"/><rect x="6" y="2" width="2" height="1" fill="#aaa"/>
<rect x="2" y="4" width="3" height="1" fill="#7a9af0"/><rect x="6" y="4" width="6" height="1" fill="#f05050"/>
<rect x="2" y="6" width="2" height="1" fill="#50a050"/><rect x="4" y="6" width="8" height="1" fill="#b0b0b0"/>
<rect x="2" y="8" width="3" height="1" fill="#70c0c0"/><rect x="6" y="8" width="6" height="1" fill="#f05050"/>
<rect x="2" y="10" width="3" height="1" fill="#7a9af0"/><rect x="6" y="10" width="6" height="1" fill="#f07070"/>
<rect x="2" y="12" width="4" height="1" fill="#f05050"/><rect x="7" y="12" width="5" height="1" fill="#f08080"/>
</g>
</svg>
<div class="cb" style="left:384px;top:688px"></div>
<div class="cb" style="left:640px;top:688px"></div><svg style="left:640px;top:688px" width="11" height="11"><polyline points="3.9,5.8 5.9,9 10.8,-2.2" fill="none" stroke="#ff0000" stroke-width="2" stroke-linejoin="round" stroke-linecap="round"/></svg>
<div class="cb" style="left:680px;top:688px"></div>
<div id="x69" class="t g" style="left:413px;top:685px;letter-spacing:0.429px;">Lagerort</div>
<div id="x70" class="t g" style="left:909px;top:685px;letter-spacing:0.441px;">Lagerorte - Nummer</div>
<div class="a" style="left:345px;top:705px;width:856px;height:1px;background:#f0f2f8"></div>
<div class="a" style="left:345px;top:706px;width:856px;height:22px;background:#fff"></div>
<svg style="left:351px;top:709px" width="16" height="17" viewBox="0 0 16 17">
<defs><linearGradient id="dg" x1="0" y1="0" x2="0" y2="1"><stop offset="0" stop-color="#fafafa"/><stop offset="1" stop-color="#e2e2e2"/></linearGradient></defs>
<rect x="0.5" y="0.5" width="14" height="15" rx="1.5" fill="url(#dg)" stroke="#7a7a7a" stroke-width="0.8"/>
<path d="M14.6,1.5 L14.6,14.2 Q14.6,15.6 13.2,15.6 L1.5,15.6" fill="none" stroke="#383838" stroke-width="1"/>
<g opacity="0.38">
<rect x="2" y="2" width="3" height="1" fill="#999"/><rect x="6" y="2" width="2" height="1" fill="#aaa"/>
<rect x="2" y="4" width="3" height="1" fill="#7a9af0"/><rect x="6" y="4" width="6" height="1" fill="#f05050"/>
<rect x="2" y="6" width="2" height="1" fill="#50a050"/><rect x="4" y="6" width="8" height="1" fill="#b0b0b0"/>
<rect x="2" y="8" width="3" height="1" fill="#70c0c0"/><rect x="6" y="8" width="6" height="1" fill="#f05050"/>
<rect x="2" y="10" width="3" height="1" fill="#7a9af0"/><rect x="6" y="10" width="6" height="1" fill="#f07070"/>
<rect x="2" y="12" width="4" height="1" fill="#f05050"/><rect x="7" y="12" width="5" height="1" fill="#f08080"/>
</g>
</svg>
<div class="cb" style="left:384px;top:711px"></div>
<div class="cb" style="left:640px;top:711px"></div><svg style="left:640px;top:711px" width="11" height="11"><polyline points="3.9,5.8 5.9,9 10.8,-2.2" fill="none" stroke="#ff0000" stroke-width="2" stroke-linejoin="round" stroke-linecap="round"/></svg>
<div class="cb" style="left:680px;top:711px"></div>
<div id="x71" class="t g" style="left:413px;top:708px;letter-spacing:0.250px;">Einzelpreis</div>
<div id="x72" class="t" style="left:709px;top:709px;">0,00</div>
<div id="x73" class="t g" style="left:909px;top:708px;letter-spacing:0.170px;">Einzelpreis</div>
<div class="t g r" style="left:1121px;width:40px;top:708px;letter-spacing:-0.3px">26</div>
<div class="t g r" style="left:1161px;width:40px;top:708px;letter-spacing:-0.3px">7</div>
<div class="a" style="left:407px;top:268px;width:220px;height:25px;border:2px solid #1f4a94;background:#b8cbe9"></div>
<div class="a" style="left:413px;top:272px;width:210px;height:16px;background:#fff"></div>
<div class="a" style="left:413px;top:272px;width:80px;height:16px;background:#0078d7"></div>
<div id="x28" class="t" style="left:413px;top:273px;color:#fff;letter-spacing:-0.240px;">Kontonummer</div>
<div class="a" style="left:493px;top:272px;width:1px;height:16px;background:#ff7a10"></div>
<div class="a" style="left:341px;top:453px;width:731px;height:92px;border:2px solid #ff6400"></div>
<div id="x74" class="t" style="left:723px;top:466px;font-size:14.5px;line-height:19.5px;color:#ff6a10;transform:scaleX(0.9);transform-origin:0 0;letter-spacing:0.987px;">Optional:</div>
<div id="x75" class="t" style="left:723px;top:485.5px;font-size:14.5px;line-height:19.5px;color:#ff6a10;transform:scaleX(0.9);transform-origin:0 0;letter-spacing:0.405px;">SQL-MDP muss</div>
<div id="x76" class="t" style="left:723px;top:505px;font-size:14.5px;line-height:19.5px;color:#ff6a10;transform:scaleX(0.9);transform-origin:0 0;letter-spacing:0.708px;">gelaufen sein</div>
</body></html>
